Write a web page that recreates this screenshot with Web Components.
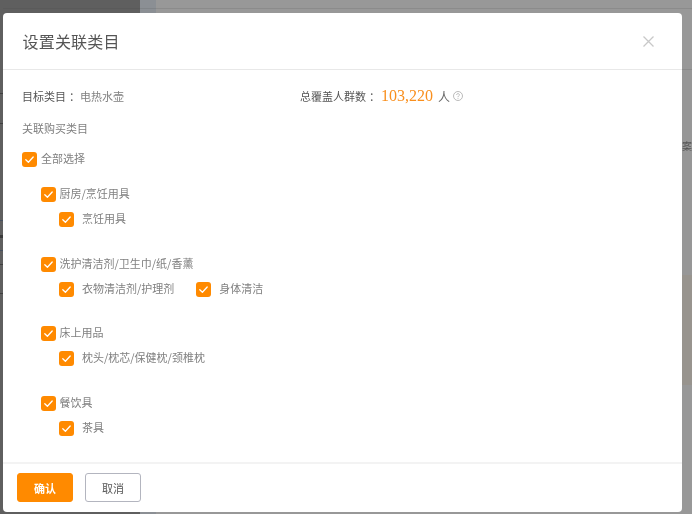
<!DOCTYPE html>
<html lang="zh">
<head>
<meta charset="utf-8">
<title>设置关联类目</title>
<style>
html, body {
    margin: 0;
    height: 100%;
    overflow: hidden;
    font-family: "Noto Sans CJK SC", "Liberation Sans", sans-serif;
}
</style>
</head>
<body>
<page-backdrop>
    <modal-dialog heading="设置关联类目">
        <info-row>
            <span slot="left">目标类目<span style="margin-left:3px">：</span><span style="color:#808080">电热水壶</span></span>
            <span slot="right">总覆盖人群数<span style="margin-left:3px">：</span></span>
            <span slot="count">103,220</span>
        </info-row>
        <section-label>关联购买类目</section-label>
        <check-box label="全部选择"></check-box>
        <category-group label="厨房/烹饪用具" items="烹饪用具" style="margin-top:16px"></category-group>
        <category-group label="洗护清洁剂/卫生巾/纸/香薰" items="衣物清洁剂/护理剂|身体清洁"></category-group>
        <category-group label="床上用品" items="枕头/枕芯/保健枕/颈椎枕"></category-group>
        <category-group label="餐饮具" items="茶具"></category-group>
        <action-button slot="footer" kind="primary">确认</action-button>
        <action-button slot="footer">取消</action-button>
    </modal-dialog>
</page-backdrop>

<script>
const BACKDROP_TEMPLATE = `
<style>
:host {
    display: flex;
    position: relative;
    width: 692px;
    height: 514px;
    overflow: hidden;
    background: #999;
    filter: blur(0.35px);
}
.side {
    width: 140px;
    background: linear-gradient(#5f5f5f 8px, #5a5a5a 8px, #5a5a5a 9px, #5f5f5f 9px);
}
.edge {
    width: 16px;
    background: linear-gradient(#8b8f94 8px, #808488 8px, #808488 9px, #8b8f94 9px);
}
.main {
    flex: 1;
    display: flex;
    justify-content: flex-end;
    background: linear-gradient(#989898 8px, #8b8b8b 8px, #8b8b8b 9px, #989898 9px, #989898 69px, #8a8a8a 69px, #8a8a8a 70px, #979797 70px, #979797 275px, #98948e 275px, #98948e 385px, #989898 385px);
}
.cut {
    margin-top: 139px;
    font-size: 10px;
    line-height: 13px;
    color: #555;
}
.marks {
    position: absolute;
    left: 0;
    top: 0;
    width: 3px;
    height: 514px;
    background: linear-gradient(#5f5f5f 93px, #3f3f3f 93px, #3f3f3f 94px, #5f5f5f 94px, #5f5f5f 123px, #3f3f3f 123px, #3f3f3f 124px, #5f5f5f 124px, #5f5f5f 220px, #46505f 220px, #46505f 221px, #5f5f5f 221px, #5f5f5f 235px, #3a3a3a 235px, #3a3a3a 238px, #5f5f5f 238px, #5f5f5f 250px, #46505f 250px, #46505f 251px, #5f5f5f 251px, #5f5f5f 264px, #3f3f3f 264px, #3f3f3f 265px, #5f5f5f 265px, #5f5f5f 293px, #3f3f3f 293px, #3f3f3f 294px, #5f5f5f 294px);
}
</style>
<div class="side"></div>
<div class="edge"></div>
<div class="main"><span class="cut">案</span></div>
<div class="marks"></div>
<slot></slot>
`

const MODAL_TEMPLATE = `
<style>
:host {
    position: absolute;
    left: 3px;
    top: 13px;
    width: 679px;
    height: 499px;
    display: flex;
    flex-direction: column;
    box-sizing: border-box;
    background: #fff;
    border-radius: 4px;
}
header {
    flex: none;
    display: flex;
    align-items: center;
    justify-content: space-between;
    box-sizing: border-box;
    height: 57px;
    padding: 0 28px 0 19.5px;
    border-bottom: 1px solid #e8e8e8;
}
h1 {
    margin: 0;
    font-size: 16px;
    font-weight: 400;
    letter-spacing: 0.2px;
    color: #555;
}
svg {
    display: block;
    stroke: #c8c8c8;
    stroke-width: 1.3;
    fill: none;
}
.body {
    flex: 1;
    min-height: 0;
    padding: 16px 19px 0;
    font-size: 11px;
}
footer {
    flex: none;
    display: flex;
    gap: 12px;
    height: 50px;
    box-sizing: border-box;
    padding: 9px 14px 0;
    border-top: 2px solid #f3f3f3;
}
</style>
<header>
    <h1></h1>
    <svg width="11" height="11" viewBox="0 0 11 11"><path d="M0.5 0.5 L10.5 10.5 M10.5 0.5 L0.5 10.5"></path></svg>
</header>
<div class="body"><slot></slot></div>
<footer><slot name="footer"></slot></footer>
`

const INFO_TEMPLATE = `
<style>
:host {
    display: flex;
    align-items: center;
    height: 20px;
    font-size: 11px;
    color: #555;
}
.left {
    width: 278px;
}
.count {
    margin-left: 1px;
    font-family: "Liberation Serif", serif;
    font-size: 16px;
    color: #f98f1d;
}
.unit {
    margin-left: 5px;
    font-size: 12px;
    color: #666;
}
svg {
    margin-left: 3px;
    fill: none;
    stroke: #aaa;
}
</style>
<span class="left"><slot name="left"></slot></span>
<slot name="right"></slot>
<span class="count"><slot name="count"></slot></span>
<span class="unit">人</span>
<svg width="10" height="10" viewBox="0 0 10 10">
    <circle cx="5" cy="5" r="4.5" stroke-width="0.8"></circle>
    <path d="M3.6 4 C3.6 2.2 6.4 2.2 6.4 3.9 C6.4 5 5 4.9 5 6.2 M5 7 V7.8" stroke-width="0.8"></path>
</svg>
`

const LABEL_TEMPLATE = `
<style>
:host {
    display: block;
    height: 20px;
    margin: 12px 0;
    line-height: 20px;
    font-size: 11px;
    color: #808080;
}
</style>
<slot></slot>
`

const CHECK_TEMPLATE = `
<style>
:host {
    display: inline-flex;
    align-items: center;
    height: 16px;
    font-size: 11px;
    color: #808080;
}
.box {
    flex: none;
    width: 15px;
    height: 15px;
    margin-top: 2px;
    border-radius: 3px;
    background: #ff8a00;
}
svg {
    display: block;
    fill: none;
    stroke: #fff;
    stroke-width: 1.3;
    stroke-linecap: round;
    stroke-linejoin: round;
}
.text {
    margin: 0 0 1px 4px;
    white-space: nowrap;
}
:host([wide]) .text {
    margin-left: 8px;
}
</style>
<span class="box">
    <svg width="15" height="15" viewBox="0 0 15 15"><path d="M3.8 7.8 L6.4 10.3 L11.2 5"></path></svg>
</span>
<span class="text"></span>
`

const GROUP_TEMPLATE = `
<style>
:host {
    display: block;
    margin: 0 0 28.5px 18.5px;
}
.items {
    display: flex;
    gap: 22px;
    margin: 9px 0 0 18.5px;
}
check-box {
    display: flex;
}
</style>
<check-box></check-box>
<div class="items"></div>
`

const BUTTON_TEMPLATE = `
<style>
:host {
    display: flex;
    align-items: center;
    justify-content: center;
    box-sizing: border-box;
    width: 56px;
    height: 29px;
    border: 1px solid #b3b5bf;
    border-radius: 3px;
    background: #fff;
    font-size: 11px;
    color: #555;
}
:host([kind="primary"]) {
    border-color: #ff8a00;
    background: #ff8a00;
    color: #fff;
    font-weight: 700;
}
</style>
<slot></slot>
`

class PageBackdrop extends HTMLElement {
    constructor() {
        super()
        this.attachShadow({ mode: 'open' })
        this.shadowRoot.innerHTML = BACKDROP_TEMPLATE
    }
}

class ModalDialog extends HTMLElement {
    constructor() {
        super()
        this.attachShadow({ mode: 'open' })
        this.shadowRoot.innerHTML = MODAL_TEMPLATE
    }

    connectedCallback() {
        this.shadowRoot.querySelector('h1').textContent = this.getAttribute('heading')
    }
}

class InfoRow extends HTMLElement {
    constructor() {
        super()
        this.attachShadow({ mode: 'open' })
        this.shadowRoot.innerHTML = INFO_TEMPLATE
    }
}

class SectionLabel extends HTMLElement {
    constructor() {
        super()
        this.attachShadow({ mode: 'open' })
        this.shadowRoot.innerHTML = LABEL_TEMPLATE
    }
}

class CheckBox extends HTMLElement {
    static get observedAttributes() {
        return ['label']
    }

    constructor() {
        super()
        this.attachShadow({ mode: 'open' })
        this.shadowRoot.innerHTML = CHECK_TEMPLATE
    }

    attributeChangedCallback(name, oldValue, value) {
        this.shadowRoot.querySelector('.text').textContent = value
    }
}

class CategoryGroup extends HTMLElement {
    constructor() {
        super()
        this.attachShadow({ mode: 'open' })
        this.shadowRoot.innerHTML = GROUP_TEMPLATE
    }

    connectedCallback() {
        this.shadowRoot.querySelector('check-box').setAttribute('label', this.getAttribute('label'))
        const items = this.shadowRoot.querySelector('.items')
        this.getAttribute('items').split('|').forEach((label) => {
            const check = document.createElement('check-box')
            check.setAttribute('label', label)
            check.setAttribute('wide', '')
            items.appendChild(check)
        })
    }
}

class ActionButton extends HTMLElement {
    constructor() {
        super()
        this.attachShadow({ mode: 'open' })
        this.shadowRoot.innerHTML = BUTTON_TEMPLATE
    }
}

customElements.define('check-box', CheckBox)
customElements.define('category-group', CategoryGroup)
customElements.define('section-label', SectionLabel)
customElements.define('info-row', InfoRow)
customElements.define('action-button', ActionButton)
customElements.define('modal-dialog', ModalDialog)
customElements.define('page-backdrop', PageBackdrop)
</script>
</body>
</html>
